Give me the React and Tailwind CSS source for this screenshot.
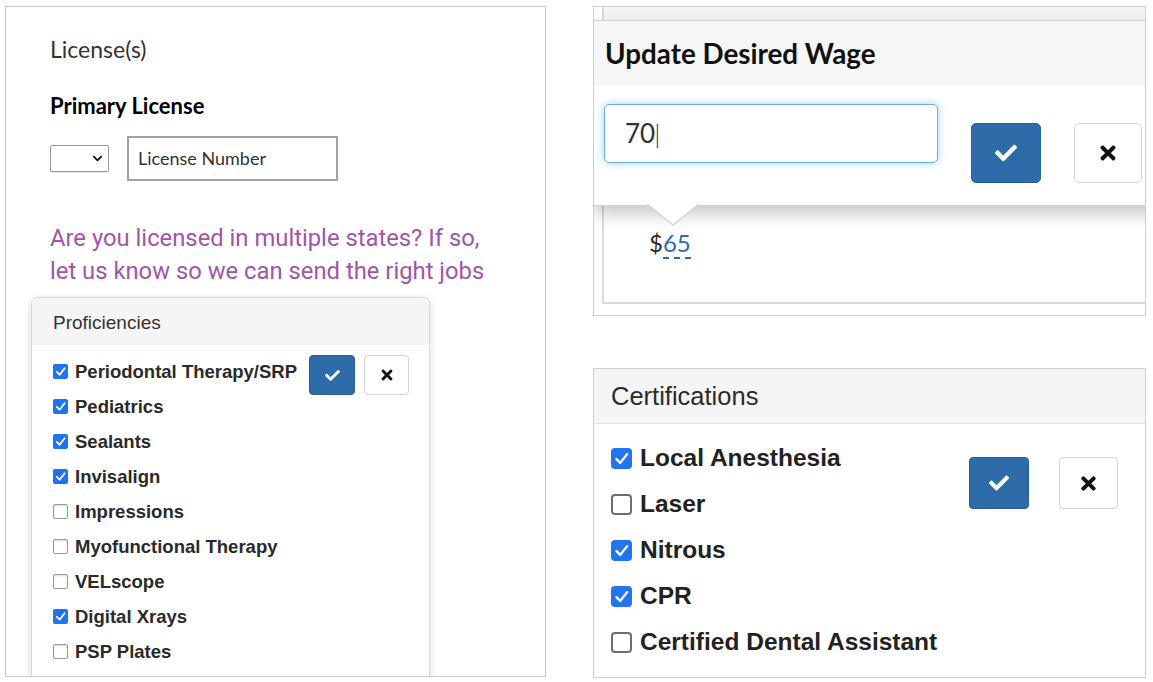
import React from "react";
import { FaCheck, FaTimes, FaChevronDown } from "react-icons/fa";

const profs = [
  ["Periodontal Therapy/SRP", true],
  ["Pediatrics", true],
  ["Sealants", true],
  ["Invisalign", true],
  ["Impressions", false],
  ["Myofunctional Therapy", false],
  ["VELscope", false],
  ["Digital Xrays", true],
  ["PSP Plates", false],
];

const certs = [
  ["Local Anesthesia", true],
  ["Laser", false],
  ["Nitrous", true],
  ["CPR", true],
  ["Certified Dental Assistant", false],
];

function SmallBox({ checked }) {
  if (checked) {
    return (
      <div className="w-[15px] h-[15px] rounded-[2px] bg-[#1f74ee] flex items-center justify-center shrink-0">
        <svg width="11" height="11" viewBox="0 0 12 12">
          <polyline points="2,6.5 5,9.5 10.5,2.5" fill="none" stroke="white" strokeWidth="2" strokeLinecap="round" strokeLinejoin="round" />
        </svg>
      </div>
    );
  }
  return <div className="w-[15px] h-[15px] rounded-[2px] border border-[#9a9a9a] bg-white shadow-[inset_0_1px_2px_rgba(0,0,0,0.15)] shrink-0" />;
}

function BigBox({ checked }) {
  if (checked) {
    return (
      <div className="w-[21px] h-[21px] rounded-[4px] bg-[#2176f0] flex items-center justify-center shrink-0">
        <svg width="15" height="15" viewBox="0 0 12 12">
          <polyline points="2,6.5 5,9.5 10.5,2.5" fill="none" stroke="white" strokeWidth="1.9" strokeLinecap="round" strokeLinejoin="round" />
        </svg>
      </div>
    );
  }
  return <div className="w-[21px] h-[21px] rounded-[4px] border-2 border-[#6e6e6e] bg-white shrink-0" />;
}

export default function App() {
  return (
    <div className="w-[1153px] h-[682px] bg-white flex pt-[6px] pl-[5px] gap-[47px] overflow-hidden">
      {/* Left panel */}
      <div className="w-[541px] h-[671px] border border-[#c8c8c8] overflow-hidden flex flex-col">
        <div className="pl-[44px] flex flex-col font-['Lato',sans-serif]">
          <div className="mt-[28px] text-[23px] leading-[28px] text-[#333]">License(s)</div>
          <div className="mt-[30px] text-[22px] leading-[26px] font-bold text-black">Primary License</div>
          <div className="mt-[17px] flex items-center gap-[18px]">
            <div className="w-[59px] h-[27px] border border-[#9a9a9a] rounded-[2px] bg-white flex items-center justify-end pr-[5px] shadow-[0_1px_1px_rgba(0,0,0,0.1)]">
              <FaChevronDown className="text-[11px] text-[#111]" />
            </div>
            <div className="w-[211px] h-[45px] border-2 border-[#a2a2a2] bg-white flex items-center pl-[9px] text-[18px] text-[#333]">
              License Number
            </div>
          </div>
          <div className="mt-[41px] font-['Roboto',sans-serif] text-[23.8px] leading-[33px] text-[#a254aa] whitespace-nowrap">
            Are you licensed in multiple states? If so,
            <br />
            let us know so we can send the right jobs
          </div>
        </div>
        <div className="mt-[9px] ml-[25px] w-[399px] shrink-0 border border-[#d8d8d8] rounded-t-[7px] shadow-[0_2px_8px_rgba(0,0,0,0.15)] bg-white font-['Liberation_Sans',Arial,sans-serif]">
          <div className="h-[47px] bg-[#f5f5f5] rounded-t-[7px] flex items-center pl-[21px] pt-[3px] text-[19px] text-[#333]">
            Proficiencies
          </div>
          <div className="flex pl-[21px] pr-[20px] pt-[9px] pb-[20px]">
            <div className="flex flex-col flex-1">
              {profs.map(([name, c]) => (
                <div key={name} className="h-[35px] flex items-center gap-[7px]">
                  <SmallBox checked={c} />
                  <span className="text-[18.5px] font-bold text-[#2a2a2a] whitespace-nowrap">{name}</span>
                </div>
              ))}
            </div>
            <div className="flex gap-[9px] mt-[1px] items-start">
              <div className="w-[46px] h-[40px] rounded-[4px] bg-[#2d6ca9] border border-[#285f95] flex items-center justify-center">
                <FaCheck className="text-white text-[15px]" />
              </div>
              <div className="w-[45px] h-[40px] rounded-[4px] bg-white border border-[#d4d4d4] flex items-center justify-center">
                <FaTimes className="text-[#111] text-[16px]" />
              </div>
            </div>
          </div>
        </div>
      </div>

      {/* Right column */}
      <div className="w-[553px] flex flex-col gap-[52px]">
        {/* Wage panel */}
        <div className="h-[310px] border border-[#cfcfcf] relative overflow-hidden bg-white">
          <div className="ml-[8px] h-[297px] border-l-2 border-b-2 border-[#dadada] flex flex-col">
            <div className="h-[14px] bg-[#f4f4f4]" />
            <div className="pt-[207px] pl-[45px] font-['Lato',sans-serif] text-[24px] leading-[30px] text-[#2b2b2b]">
              $<span className="text-[#2a6db5] border-b-2 border-dashed border-[#2a6db5]">65</span>
            </div>
          </div>

          {/* popover */}
          <div className="absolute top-[13px] left-0 w-[570px] bg-white border-t border-b border-[#d0d0d0] shadow-[0_8px_16px_rgba(0,0,0,0.22)] font-['Lato',sans-serif]">
            <div className="h-[65px] bg-[#f6f6f6] flex items-center pl-[11px] text-[27.8px] font-bold text-[#111]">
              Update Desired Wage
            </div>
            <div className="h-[119px] flex items-start pl-[10px] pt-[18px]">
              <div className="w-[334px] h-[59px] rounded-[5px] border border-[#6aaee8] shadow-[0_0_8px_rgba(102,175,233,0.6)] bg-white flex items-center pl-[20px] text-[26px] text-[#333]">
                70<span className="font-light -ml-[1px]">|</span>
              </div>
              <div className="ml-[33px] mt-[19px] w-[70px] h-[60px] rounded-[5px] bg-[#2d6ca9] border border-[#285f95] flex items-center justify-center">
                <FaCheck className="text-white text-[22px]" />
              </div>
              <div className="ml-[33px] mt-[19px] w-[68px] h-[60px] rounded-[5px] bg-white border border-[#d4d4d4] flex items-center justify-center">
                <FaTimes className="text-[#111] text-[22px]" />
              </div>
            </div>
          </div>
          {/* arrow */}
          <svg className="absolute top-[197px] left-[53px]" width="52" height="22" viewBox="0 0 52 22">
            <polygon points="0,0 26,21 52,0" fill="white" />
            <polyline points="0,0 26,21 52,0" fill="none" stroke="#d6d6d6" strokeWidth="1.5" />
          </svg>
        </div>

        {/* Certifications */}
        <div className="h-[310px] border border-[#cfcfcf] bg-white font-['Liberation_Sans',Arial,sans-serif]">
          <div className="h-[55px] bg-[#f5f5f5] border-b border-[#e2e2e2] flex items-center pl-[17px] text-[25.5px] text-[#2b2b2b]">
            Certifications
          </div>
          <div className="flex pl-[17px] pr-[27px] pt-[11px]">
            <div className="flex flex-col flex-1">
              {certs.map(([name, c]) => (
                <div key={name} className="h-[46px] flex items-center gap-[8px]">
                  <BigBox checked={c} />
                  <span className="text-[24.5px] font-bold text-[#222] whitespace-nowrap">{name}</span>
                </div>
              ))}
            </div>
            <div className="flex gap-[30px] mt-[22px] items-start">
              <div className="w-[60px] h-[52px] rounded-[4px] bg-[#2d6ca9] border border-[#285f95] flex items-center justify-center">
                <FaCheck className="text-white text-[20px]" />
              </div>
              <div className="w-[59px] h-[52px] rounded-[4px] bg-white border border-[#d4d4d4] flex items-center justify-center">
                <FaTimes className="text-[#111] text-[21px]" />
              </div>
            </div>
          </div>
        </div>
      </div>
    </div>
  );
}
